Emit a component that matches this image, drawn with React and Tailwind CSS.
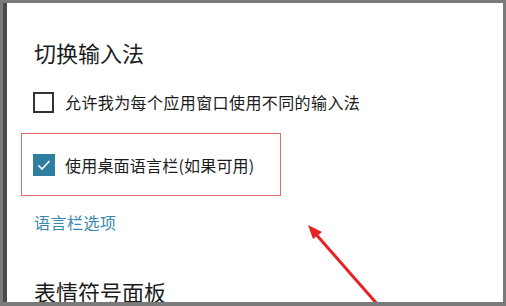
export default function App() {
  const font = { fontFamily: '"Noto Sans CJK SC", "Noto Sans", sans-serif' };
  return (
    <div className="w-[506px] h-[306px] bg-[#7a7a7a] pl-[3px] pt-[3px] pr-[3px] pb-[4px] flex" style={font}>
      <div className="w-[4px] bg-[#4a4a4a]" />
      <div className="flex-1 bg-white relative overflow-hidden pl-[27px] pt-[34px] text-[#1b1b1b]">
        <div className="text-[22px] leading-[30px]">切换输入法</div>
        <div className="mt-[24px] flex items-center gap-[11px] h-[22px]">
          <div className="w-[21px] h-[21px] border-2 border-[#333333] ml-[-1px]" />
          <span className="text-[16px] leading-[22px] tracking-[0.4px]">允许我为每个应用窗口使用不同的输入法</span>
        </div>
        <div className="mt-[20px] ml-[-13px] w-[260px] h-[63px] border border-[#e46a6a] flex items-center pl-[11px] pt-[1px]">
          <div className="w-[22px] h-[22px] bg-[#2f7ea0] flex items-center justify-center">
            <svg width="16" height="16" viewBox="0 0 16 16">
              <path d="M2.5 8.5 L6 12 L13.5 4" fill="none" stroke="white" strokeWidth="1.6" />
            </svg>
          </div>
          <span className="ml-[10px] text-[16px] leading-[22px] tracking-[0.2px]">使用桌面语言栏(如果可用)</span>
        </div>
        <div className="mt-[14px] text-[16px] leading-[24px] text-[#3a88ad] tracking-[0.5px]">语言栏选项</div>
        <div className="mt-[42px] text-[22px] leading-[30px]">表情符号面板</div>
        <svg className="absolute left-0 top-0" width="496" height="299" viewBox="0 0 496 299">
          <line x1="371" y1="302" x2="307" y2="229" stroke="#e82222" strokeWidth="3" />
          <polygon points="301,222 315,229 306,236" fill="#e82222" />
        </svg>
      </div>
    </div>
  );
}
